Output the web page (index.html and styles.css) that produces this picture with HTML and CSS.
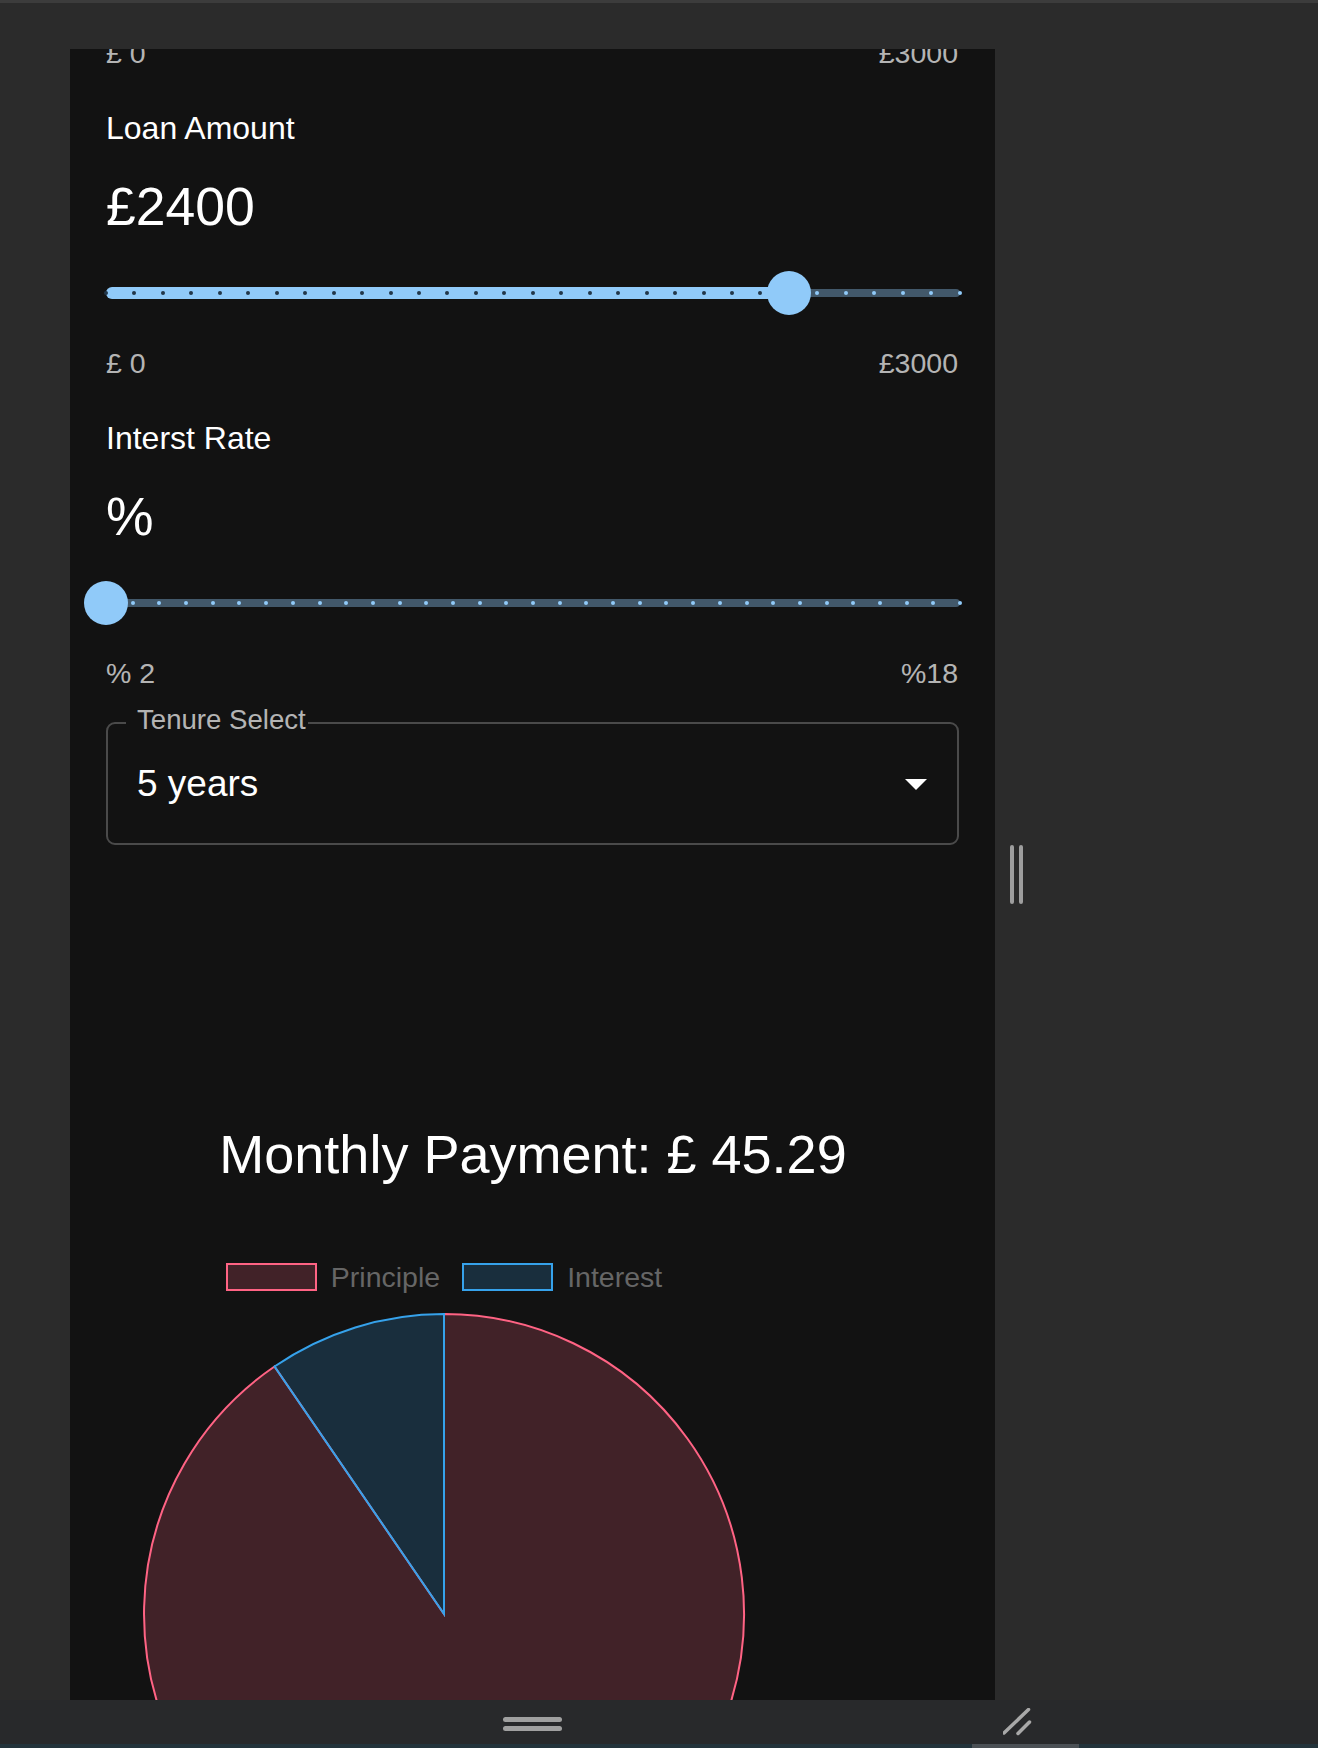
FILE: index.html
```html
<!DOCTYPE html>
<html lang="en">
<head>
<meta charset="utf-8">
<title>Loan Calculator</title>
<link rel="stylesheet" href="styles.css">
</head>
<body>
<div class="topline"></div>
<div class="main">
  <div class="panel">
    <div class="content">
      <div class="minmax"><span>£ 0</span><span>£3000</span></div>

      <section class="field">
        <div class="label">Loan Amount</div>
        <div class="value">£2400</div>
        <div class="slider">
          <div class="rail"></div>
          <div class="track" style="width:80%"></div>
          <div class="marks">
            <span class="mark on"></span><span class="mark on"></span><span class="mark on"></span><span class="mark on"></span><span class="mark on"></span>
            <span class="mark on"></span><span class="mark on"></span><span class="mark on"></span><span class="mark on"></span><span class="mark on"></span>
            <span class="mark on"></span><span class="mark on"></span><span class="mark on"></span><span class="mark on"></span><span class="mark on"></span>
            <span class="mark on"></span><span class="mark on"></span><span class="mark on"></span><span class="mark on"></span><span class="mark on"></span>
            <span class="mark on"></span><span class="mark on"></span><span class="mark on"></span><span class="mark on"></span><span class="mark on"></span>
            <span class="mark"></span><span class="mark"></span><span class="mark"></span><span class="mark"></span><span class="mark"></span>
            <span class="mark"></span>
          </div>
          <div class="thumb" style="left:80%"></div>
        </div>
        <div class="minmax"><span>£ 0</span><span>£3000</span></div>
      </section>

      <section class="field">
        <div class="label">Interst Rate</div>
        <div class="value">%</div>
        <div class="slider">
          <div class="rail"></div>
          <div class="marks">
            <span class="mark on"></span><span class="mark"></span><span class="mark"></span><span class="mark"></span><span class="mark"></span>
            <span class="mark"></span><span class="mark"></span><span class="mark"></span><span class="mark"></span><span class="mark"></span>
            <span class="mark"></span><span class="mark"></span><span class="mark"></span><span class="mark"></span><span class="mark"></span>
            <span class="mark"></span><span class="mark"></span><span class="mark"></span><span class="mark"></span><span class="mark"></span>
            <span class="mark"></span><span class="mark"></span><span class="mark"></span><span class="mark"></span><span class="mark"></span>
            <span class="mark"></span><span class="mark"></span><span class="mark"></span><span class="mark"></span><span class="mark"></span>
            <span class="mark"></span><span class="mark"></span><span class="mark"></span>
          </div>
          <div class="thumb" style="left:0%"></div>
        </div>
        <div class="minmax"><span>% 2</span><span>%18</span></div>
      </section>

      <div class="select">
        <span class="select-label">Tenure Select</span>
        <span class="select-value">5 years</span>
        <svg class="select-arrow" width="22" height="11" viewBox="0 0 22 11"><path d="M0 0 L11 11 L22 0 Z" fill="#ffffff"/></svg>
      </div>

      <div class="summary">
        <h2 class="payment">Monthly Payment: £ 45.29</h2>
        <div class="chart">
          <div class="legend">
            <div class="legend-item"><span class="swatch swatch-principle"></span><span class="legend-text">Principle</span></div>
            <div class="legend-item"><span class="swatch swatch-interest"></span><span class="legend-text">Interest</span></div>
          </div>
          <svg class="pie" width="676" height="620" viewBox="0 0 676 620">
            <path d="M338 310 L338 10 A300 300 0 1 1 168.5 62.5 Z" fill="rgba(255,99,132,0.2)" stroke="#ff6384" stroke-width="2"/>
            <path d="M338 310 L168.5 62.5 A300 300 0 0 1 338 10 Z" fill="rgba(54,162,235,0.2)" stroke="#36a2eb" stroke-width="2"/>
          </svg>
        </div>
      </div>
    </div>
  </div>
  <div class="side">
    <span class="grip"></span><span class="grip"></span>
  </div>
</div>
<div class="bottombar">
  <div class="bb-handle"><span class="hbar"></span><span class="hbar"></span></div>
  <svg class="resize" width="30" height="30" viewBox="0 0 30 30">
    <line x1="1" y1="25" x2="25.5" y2="1.5" stroke="#a8a8a8" stroke-width="3.5" stroke-linecap="round"/>
    <line x1="15" y1="25.5" x2="26.5" y2="14" stroke="#a8a8a8" stroke-width="3.5" stroke-linecap="round"/>
  </svg>
</div>
<div class="bottomline"><span class="seg"></span></div>
</body>
</html>
```

FILE: styles.css
```css
* { box-sizing: border-box; }

html, body {
  margin: 0;
  padding: 0;
}

body {
  width: 1318px;
  height: 1748px;
  overflow: hidden;
  background: #2b2b2b;
  font-family: "Liberation Sans", Arial, Helvetica, sans-serif;
  color: #ffffff;
}

.topline {
  height: 3px;
  background: #3c3c3c;
}

.main {
  display: flex;
  margin-top: 46px;
  height: 1651px;
}

.panel {
  margin-left: 70px;
  width: 925px;
  height: 1651px;
  overflow: hidden;
  background: #121212;
  flex: none;
}

.content {
  margin-top: -14px;
  padding: 0 35px 0 36px;
}

.minmax {
  display: flex;
  justify-content: space-between;
  height: 36px;
  line-height: 36px;
  font-size: 28.5px;
  padding-right: 2px;
  color: rgba(255, 255, 255, 0.7);
  margin-bottom: 37px;
}

.field .minmax { margin-bottom: 37px; }
.field:last-of-type .minmax { margin-bottom: 31px; }

.label {
  height: 40px;
  line-height: 40px;
  font-size: 32px;
  margin-bottom: 29px;
}

.value {
  height: 60px;
  line-height: 60px;
  font-size: 53.5px;
  margin-bottom: 34px;
}

.slider {
  position: relative;
  height: 44px;
  margin-bottom: 30px;
}

.rail {
  position: absolute;
  left: 0;
  right: 0;
  top: 50%;
  height: 8px;
  margin-top: -4px;
  border-radius: 4px;
  background: #90caf9;
  opacity: 0.38;
}

.track {
  position: absolute;
  left: 0;
  top: 50%;
  height: 12px;
  margin-top: -6px;
  border-radius: 6px;
  background: #90caf9;
}

.marks {
  position: absolute;
  left: -2px;
  right: -2px;
  top: 50%;
  height: 4px;
  margin-top: -2px;
  display: flex;
  justify-content: space-between;
}

.mark {
  width: 4px;
  height: 4px;
  border-radius: 50%;
  background: #90caf9;
}

.mark.on { background: #22374a; }

.thumb {
  position: absolute;
  top: 0;
  width: 44px;
  height: 44px;
  margin-left: -22px;
  border-radius: 50%;
  background: #90caf9;
}

.select {
  position: relative;
  display: flex;
  align-items: center;
  height: 123px;
  margin-right: 1px;
  border: 2px solid rgba(255, 255, 255, 0.24);
  border-radius: 9px;
  padding-left: 29px;
}

.select-label {
  position: absolute;
  top: -19px;
  left: 18px;
  padding: 0 2px 0 11px;
  height: 30px;
  line-height: 30px;
  font-size: 27.6px;
  color: rgba(255, 255, 255, 0.7);
  background: #121212;
}

.select-value {
  font-size: 37px;
  line-height: 44px;
}

.select-arrow {
  margin-left: auto;
  margin-right: 30px;
  margin-top: 2px;
}

.summary {
  margin-top: 277px;
}

.payment {
  margin: 0;
  height: 64px;
  line-height: 64px;
  font-size: 54px;
  font-weight: normal;
  text-align: center;
}

.chart {
  width: 676px;
}

.legend {
  display: flex;
  justify-content: center;
  gap: 22px;
  margin-top: 77px;
  height: 28px;
}

.legend-item {
  display: flex;
  align-items: center;
  gap: 14px;
}

.swatch {
  width: 91px;
  height: 28px;
  border: 2px solid;
}

.swatch-principle {
  border-color: #ff6384;
  background: rgba(255, 99, 132, 0.2);
}

.swatch-interest {
  border-color: #36a2eb;
  background: rgba(54, 162, 235, 0.2);
}

.legend-text {
  font-size: 28.5px;
  line-height: 28px;
  color: #666666;
}

.pie {
  display: block;
  margin-top: 13px;
}

.side {
  display: flex;
  align-items: center;
  gap: 5px;
  padding-left: 15px;
}

.grip {
  width: 4px;
  height: 59px;
  border-radius: 2px;
  background: #9e9e9e;
}

.bottombar {
  display: flex;
  height: 44px;
  background: #28292b;
}

.bb-handle {
  width: 925px;
  margin-left: 70px;
  display: flex;
  flex-direction: column;
  align-items: center;
  gap: 4px;
  padding-top: 17px;
}

.hbar {
  width: 59px;
  height: 5px;
  border-radius: 2.5px;
  background: #a0a0a0;
}

.resize {
  margin-left: 8px;
  margin-top: 8px;
}

.bottomline {
  display: flex;
  height: 4px;
  background: #23333b;
}

.seg {
  margin-left: 972px;
  width: 107px;
  height: 4px;
  background: #4b5055;
}
```
